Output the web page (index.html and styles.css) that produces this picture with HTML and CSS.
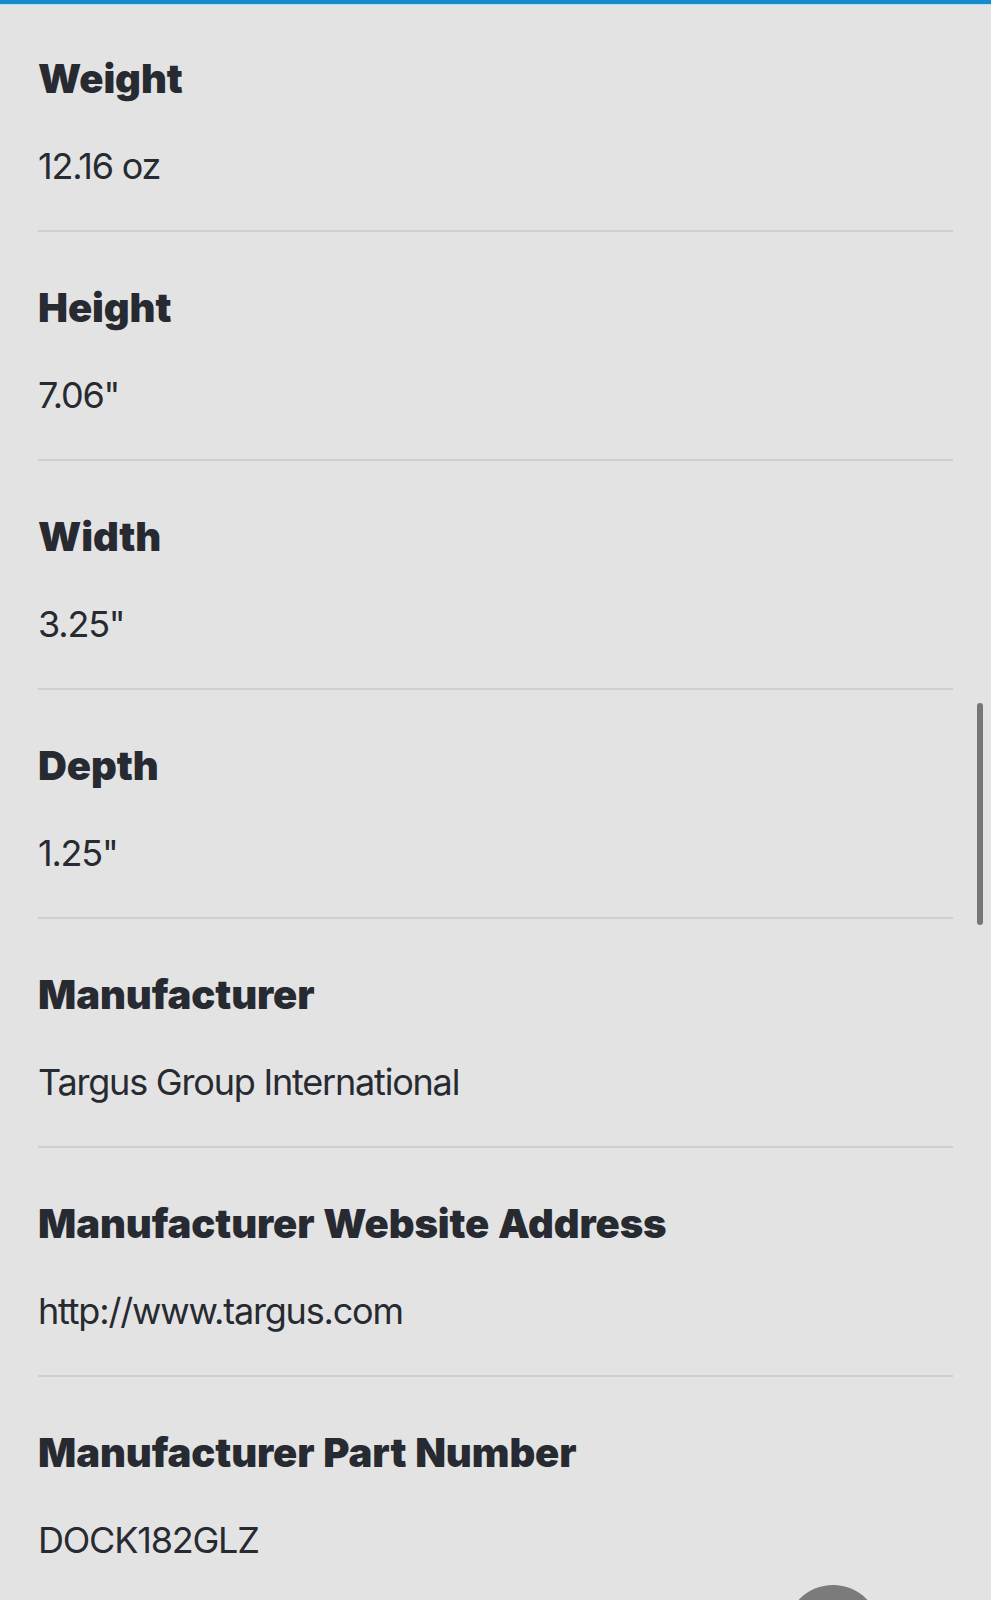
FILE: index.html
```html
<!DOCTYPE html>
<html lang="en">
<head>
<meta charset="utf-8">
<title>Specifications</title>
<link rel="stylesheet" href="styles.css">
</head>
<body>
<div class="topbar"></div>
<main class="specs">
  <section class="spec-row">
    <h3 class="spec-label">Weight</h3>
    <p class="spec-value">12.16 oz</p>
  </section>
  <section class="spec-row">
    <h3 class="spec-label">Height</h3>
    <p class="spec-value">7.06"</p>
  </section>
  <section class="spec-row">
    <h3 class="spec-label">Width</h3>
    <p class="spec-value">3.25"</p>
  </section>
  <section class="spec-row">
    <h3 class="spec-label">Depth</h3>
    <p class="spec-value">1.25"</p>
  </section>
  <section class="spec-row">
    <h3 class="spec-label">Manufacturer</h3>
    <p class="spec-value">Targus Group International</p>
  </section>
  <section class="spec-row">
    <h3 class="spec-label">Manufacturer Website Address</h3>
    <p class="spec-value">http://www.targus.com</p>
  </section>
  <section class="spec-row">
    <h3 class="spec-label">Manufacturer Part Number</h3>
    <p class="spec-value">DOCK182GLZ</p>
  </section>
</main>
<div class="scrollbar"></div>
<button class="back-top" aria-label="Back to top"></button>
</body>
</html>
```

FILE: styles.css
```css
html, body {
  margin: 0;
  padding: 0;
}

body {
  background: #e3e3e3;
  color: #272a31;
  font-family: Inter, "Noto Sans", "Liberation Sans", sans-serif;
}

.topbar {
  height: 4px;
  background: #168bca;
  border-bottom: 1px solid #a6e2f3;
}

.specs {
  padding: 0 38px;
}

.spec-row {
  padding: 52px 0 42px;
  border-bottom: 2px solid #cfcfcf;
}

.spec-row:first-child {
  padding-top: 50px;
}

.spec-label {
  margin: 0;
  font-size: 40px;
  line-height: 48px;
  font-weight: 900;
  letter-spacing: -0.1px;
  word-spacing: 1px;
}

.spec-value {
  margin: 41px 0 0;
  font-size: 36px;
  line-height: 44px;
  font-weight: 400;
  letter-spacing: -1.2px;
}

.scrollbar {
  position: fixed;
  right: 8px;
  top: 703px;
  width: 6px;
  height: 222px;
  border-radius: 3px;
  background: #767676;
}

.back-top {
  position: fixed;
  left: 786px;
  top: 1585px;
  width: 94px;
  height: 94px;
  border: 0;
  padding: 0;
  border-radius: 50%;
  background: #7b7b7b;
}
```
